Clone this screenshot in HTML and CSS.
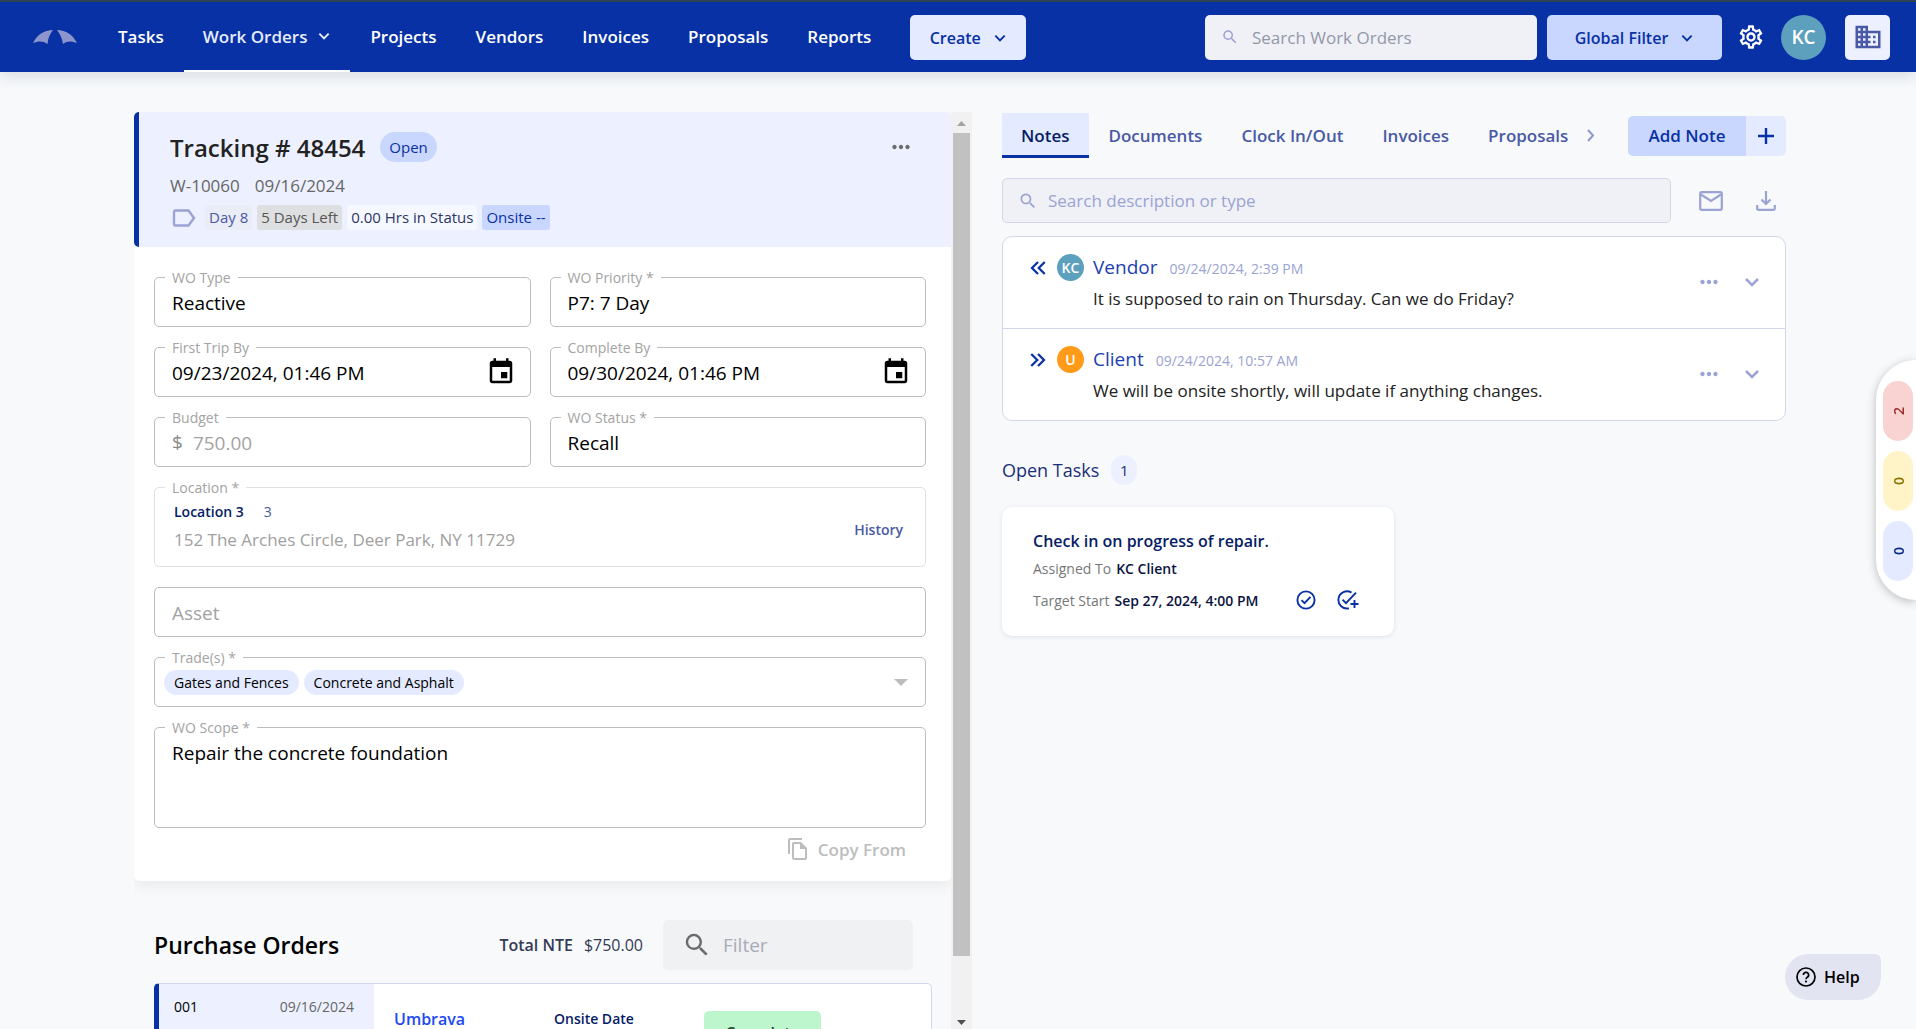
FILE: index.html
```html
<!DOCTYPE html>
<html lang="en">
<head>
  <meta charset="UTF-8">
  <title>Work Order W-10060</title>
  <meta name="viewport" content="width=device-width, initial-scale=1.0">
  <link rel="stylesheet" href="styles.css">
</head>
<body>

<!-- Shared icons -->
<svg class="sprite" aria-hidden="true">
  <symbol id="i-chevron" viewBox="0 0 24 24"><path d="M4 8l8 8 8-8" fill="none" stroke="currentColor" stroke-width="3.400"/></symbol>
  <symbol id="i-search" viewBox="0 0 24 24"><path fill="currentColor" d="M15.5 14h-.79l-.28-.27A6.47 6.47 0 0 0 16 9.5 6.5 6.5 0 1 0 9.5 16c1.61 0 3.09-.59 4.23-1.57l.27.28v.79l5 4.99L20.49 19l-4.99-5zm-6 0C7.01 14 5 11.99 5 9.5S7.01 5 9.5 5 14 7.01 14 9.5 11.99 14 9.5 14z"/></symbol>
  <symbol id="i-dots" viewBox="0 0 24 24"><path fill="currentColor" d="M6 10c-1.1 0-2 .9-2 2s.9 2 2 2 2-.9 2-2-.9-2-2-2zm12 0c-1.1 0-2 .9-2 2s.9 2 2 2 2-.9 2-2-.9-2-2-2zm-6 0c-1.1 0-2 .9-2 2s.9 2 2 2 2-.9 2-2-.9-2-2-2z"/></symbol>
  <symbol id="i-calendar" viewBox="0 0 24 24"><path fill="currentColor" d="M17 12h-5v5h5v-5zM16 1v2H8V1H6v2H5c-1.11 0-1.99.9-1.99 2L3 19c0 1.1.89 2 2 2h14c1.1 0 2-.9 2-2V5c0-1.1-.9-2-2-2h-1V1h-2zm3 18H5V8h14v11z"/></symbol>
  <symbol id="i-double" viewBox="0 0 24 24"><path d="M12 4l-8 8 8 8M21 4l-8 8 8 8" fill="none" stroke="currentColor" stroke-width="3"/></symbol>
</svg>

<header class="topbar">
  <a href="#" class="logo" aria-label="Home">
    <svg width="44" height="14" viewBox="0 0 44 14"><path fill="#8c95cc" d="M0 13C4 5 11 0 20 0C17 4 15 8 14.500 14C10 10.500 5 11 0 13zM24 0C33 0 40 5 44 13C39 11 34 10.500 30 14C29 8 27 4 24 0z"/></svg>
  </a>
  <nav class="nav">
    <a href="#">Tasks</a>
    <a href="#" class="active">Work Orders <svg class="icon-sm"><use href="#i-chevron"/></svg></a>
    <a href="#">Projects</a>
    <a href="#">Vendors</a>
    <a href="#">Invoices</a>
    <a href="#">Proposals</a>
    <a href="#">Reports</a>
  </nav>
  <button class="btn create">Create <svg class="icon-sm"><use href="#i-chevron"/></svg></button>
  <div class="topbar-right">
    <div class="top-search">
      <svg class="icon-md"><use href="#i-search"/></svg>
      <input type="text" placeholder="Search Work Orders" aria-label="Search Work Orders">
    </div>
    <button class="btn global">Global Filter <svg class="icon-sm"><use href="#i-chevron"/></svg></button>
    <button class="icon-btn gear" aria-label="Settings">
      <svg width="28" height="28" viewBox="0 0 24 24"><path fill="currentColor" d="M19.430 12.980c.04-.32.07-.64.07-.98 0-.34-.03-.66-.07-.98l2.110-1.650c.19-.15.24-.42.12-.64l-2-3.460c-.09-.16-.26-.25-.44-.25-.06 0-.12.010-.17.030l-2.490 1c-.52-.4-1.080-.73-1.690-.98l-.38-2.650C14.460 2.180 14.250 2 14 2h-4c-.25 0-.46.18-.49.42l-.38 2.650c-.61.25-1.170.59-1.690.98l-2.490-1c-.06-.02-.12-.03-.18-.03-.17 0-.34.09-.43.250l-2 3.460c-.13.220-.07.490.12.640l2.110 1.650c-.04.320-.07.650-.07.980s.03.660.07.980l-2.110 1.650c-.19.150-.24.420-.12.640l2 3.460c.09.160.26.250.44.250.06 0 .12-.01.170-.03l2.490-1c.52.400 1.080.730 1.690.980l.38 2.650c.03.240.24.420.49.420h4c.25 0 .46-.18.49-.42l.38-2.650c.61-.25 1.170-.59 1.690-.98l2.490 1c.06.020.12.030.18.030.17 0 .34-.09.43-.25l2-3.460c.12-.22.070-.49-.12-.64l-2.110-1.650zm-1.980-1.710c.04.310.05.520.05.730 0 .210-.02.430-.05.730l-.14 1.130.89.700 1.080.840-.7 1.210-1.270-.51-1.040-.42-.9.680c-.43.320-.84.560-1.250.730l-1.060.430-.16 1.130-.2 1.350h-1.400l-.19-1.350-.16-1.130-1.060-.43c-.43-.18-.83-.41-1.230-.71l-.91-.7-1.060.430-1.270.510-.7-1.210 1.080-.84.890-.7-.14-1.130c-.03-.31-.05-.54-.05-.74s.02-.43.05-.73l.14-1.130-.89-.7-1.080-.84.7-1.210 1.270.510 1.040.420.9-.68c.43-.32.84-.56 1.250-.73l1.060-.43.16-1.130.2-1.350h1.390l.19 1.350.16 1.130 1.060.430c.43.180.83.410 1.230.710l.91.700 1.060-.43 1.270-.51.7 1.210-1.070.85-.89.700.14 1.130zM12 8c-2.210 0-4 1.790-4 4s1.790 4 4 4 4-1.790 4-4-1.790-4-4-4zm0 6c-1.100 0-2-.9-2-2s.9-2 2-2 2 .9 2 2-.9 2-2 2z"/></svg>
    </button>
    <button class="avatar big">KC</button>
    <button class="building" aria-label="Company">
      <svg width="30" height="30" viewBox="0 0 24 24"><path fill="currentColor" d="M12 7V3H2v18h20V7H12zM6 19H4v-2h2v2zm0-4H4v-2h2v2zm0-4H4V9h2v2zm0-4H4V5h2v2zm4 12H8v-2h2v2zm0-4H8v-2h2v2zm0-4H8V9h2v2zm0-4H8V5h2v2zm10 12h-8v-2h2v-2h-2v-2h2v-2h-2V9h8v10zm-2-8h-2v2h2v-2zm0 4h-2v2h2v-2z"/></svg>
    </button>
  </div>
</header>

<main class="page">

  <!-- Left: work order -->
  <section class="left">
    <div class="scroll-area">
      <div class="card wo">
        <div class="wo-head">
          <div class="wo-title">
            <h1>Tracking # 48454</h1>
            <span class="status">Open</span>
            <button class="icon-btn more" aria-label="More"><svg class="icon-lg"><use href="#i-dots"/></svg></button>
          </div>
          <div class="wo-sub"><span>W-10060</span><span>09/16/2024</span></div>
          <div class="tags">
            <svg width="24" height="18" viewBox="0 0 24 18"><path d="M2 3a1.500 1.500 0 0 1 1.500-1.500H16.500L22 9l-5.500 7.500H3.500A1.500 1.500 0 0 1 2 15z" fill="none" stroke="#9aa3d3" stroke-width="2.400"/></svg>
            <span class="tag day">Day 8</span>
            <span class="tag left-days">5 Days Left</span>
            <span class="tag hrs">0.00 Hrs in Status</span>
            <span class="tag onsite">Onsite --</span>
          </div>
        </div>

        <form class="wo-form">
          <div class="field">
            <label for="type">WO Type</label>
            <input id="type" type="text" value="Reactive">
          </div>
          <div class="field">
            <label for="priority">WO Priority *</label>
            <input id="priority" type="text" value="P7: 7 Day">
          </div>
          <div class="field date">
            <label for="first">First Trip By</label>
            <input id="first" type="text" value="09/23/2024, 01:46 PM">
            <svg class="cal"><use href="#i-calendar"/></svg>
          </div>
          <div class="field date">
            <label for="complete">Complete By</label>
            <input id="complete" type="text" value="09/30/2024, 01:46 PM">
            <svg class="cal"><use href="#i-calendar"/></svg>
          </div>
          <div class="field muted">
            <label for="budget">Budget</label>
            <span class="prefix">$</span>
            <input id="budget" type="text" value="750.00">
          </div>
          <div class="field">
            <label for="status">WO Status *</label>
            <input id="status" type="text" value="Recall">
          </div>
          <div class="field wide location">
            <span class="legend">Location *</span>
            <div class="loc-info">
              <div class="loc-name"><a href="#">Location 3</a><span>3</span></div>
              <div class="loc-addr">152 The Arches Circle, Deer Park, NY 11729</div>
            </div>
            <a href="#" class="history">History</a>
          </div>
          <div class="field wide">
            <input type="text" placeholder="Asset" aria-label="Asset">
          </div>
          <div class="field wide trades">
            <span class="legend">Trade(s) *</span>
            <span class="chip">Gates and Fences</span>
            <span class="chip">Concrete and Asphalt</span>
            <button type="button" class="icon-btn caret" aria-label="Show trades"><svg width="14" height="7" viewBox="0 0 14 7"><path d="M0 0h14L7 7z" fill="currentColor"/></svg></button>
          </div>
          <div class="field wide scope">
            <label for="scope">WO Scope *</label>
            <textarea id="scope">Repair the concrete foundation</textarea>
          </div>
        </form>
        <div class="wo-foot">
          <button class="copy">
            <svg width="24" height="24" viewBox="0 0 24 24"><path fill="currentColor" d="M16 1H4C2.900 1 2 1.900 2 3v14h2V3h12V1zm-1 4H8c-1.100 0-2 .9-2 2v14c0 1.100.9 2 2 2h11c1.100 0 2-.9 2-2V11l-6-6zM8 21V7h6v5h5v9H8z"/></svg>
            Copy From
          </button>
        </div>
      </div>

      <!-- Purchase orders -->
      <div class="po-head">
        <h2>Purchase Orders</h2>
        <span class="nte">Total NTE</span>
        <span class="nte-value">$750.00</span>
        <div class="filter">
          <svg class="icon-xl"><use href="#i-search"/></svg>
          <input type="text" placeholder="Filter" aria-label="Filter">
        </div>
      </div>
      <div class="po">
        <div class="po-id"><span>001</span><span class="po-date">09/16/2024</span></div>
        <a href="#" class="po-vendor">Umbrava</a>
        <span class="po-onsite">Onsite Date</span>
        <span class="po-status">Complete</span>
      </div>
    </div>
    <div class="scrollbar" aria-hidden="true">
      <svg width="9" height="5" viewBox="0 0 9 5"><path d="M0 5h9L4.500 0z" fill="#a3a3a3"/></svg>
      <div class="thumb"></div>
      <svg width="9" height="5" viewBox="0 0 9 5"><path d="M0 0h9L4.500 5z" fill="#505050"/></svg>
    </div>
  </section>

  <!-- Right: notes and tasks -->
  <section class="right">
    <div class="tab-row">
      <nav class="tabs">
        <a href="#" class="active">Notes</a>
        <a href="#">Documents</a>
        <a href="#">Clock In/Out</a>
        <a href="#">Invoices</a>
        <a href="#">Proposals</a>
      </nav>
      <svg class="next" width="8" height="13" viewBox="0 0 8 13"><path d="M1 1l5 5.500L1 12" fill="none" stroke="#8f98cc" stroke-width="2"/></svg>
      <div class="add-note">
        <button class="add">Add Note</button>
        <button class="plus" aria-label="Add"><svg width="16" height="16" viewBox="0 0 16 16"><path d="M8 0v16M0 8h16" stroke="currentColor" stroke-width="2.400"/></svg></button>
      </div>
    </div>

    <div class="note-tools">
      <div class="note-search">
        <svg class="icon-note"><use href="#i-search"/></svg>
        <input type="text" placeholder="Search description or type" aria-label="Search notes">
      </div>
      <button class="icon-btn" aria-label="Email"><svg width="24" height="20" viewBox="0 0 24 20"><rect x="1.200" y="1.200" width="21.600" height="17.600" rx="1.500" fill="none" stroke="currentColor" stroke-width="2.200"/><path d="M2 3.500l10 6.500 10-6.500" fill="none" stroke="currentColor" stroke-width="2.200"/></svg></button>
      <button class="icon-btn" aria-label="Download"><svg width="20" height="20" viewBox="0 0 20 20"><path d="M10 0v13M5.500 8.500L10 13l4.500-4.500M1.200 14v3.300a1.500 1.500 0 0 0 1.500 1.500h14.600a1.500 1.500 0 0 0 1.500-1.500V14" fill="none" stroke="currentColor" stroke-width="2.200"/></svg></button>
    </div>

    <div class="notes">
      <article class="note">
        <svg class="icon-dir"><use href="#i-double"/></svg>
        <span class="avatar small">KC</span>
        <div class="note-body">
          <div class="note-top"><a href="#">Vendor</a><time>09/24/2024, 2:39 PM</time></div>
          <p>It is supposed to rain on Thursday. Can we do Friday?</p>
        </div>
        <button class="icon-btn" aria-label="More"><svg class="icon-lg"><use href="#i-dots"/></svg></button>
        <button class="icon-btn" aria-label="Expand"><svg class="icon-exp"><use href="#i-chevron"/></svg></button>
      </article>
      <article class="note">
        <svg class="icon-dir flip"><use href="#i-double"/></svg>
        <span class="avatar small orange">U</span>
        <div class="note-body">
          <div class="note-top"><a href="#">Client</a><time>09/24/2024, 10:57 AM</time></div>
          <p>We will be onsite shortly, will update if anything changes.</p>
        </div>
        <button class="icon-btn" aria-label="More"><svg class="icon-lg"><use href="#i-dots"/></svg></button>
        <button class="icon-btn" aria-label="Expand"><svg class="icon-exp"><use href="#i-chevron"/></svg></button>
      </article>
    </div>

    <div class="tasks-head"><h3>Open Tasks</h3><span class="count">1</span></div>
    <div class="task">
      <h4>Check in on progress of repair.</h4>
      <div class="task-line"><span>Assigned To</span><b>KC Client</b></div>
      <div class="task-line last">
        <span>Target Start</span><b>Sep 27, 2024, 4:00 PM</b>
        <button class="icon-btn" aria-label="Complete task"><svg width="20" height="20" viewBox="0 0 20 20"><circle cx="10" cy="10" r="8.600" fill="none" stroke="currentColor" stroke-width="1.900"/><path d="M5.500 10.200l3 3 6-6.400" fill="none" stroke="currentColor" stroke-width="1.900"/></svg></button>
        <button class="icon-btn" aria-label="Complete and add task"><svg width="22" height="20" viewBox="0 0 22 20"><path d="M14.500 2.600A8.600 8.600 0 1 0 12 18.300M5.500 9.700l3.500 3.500L19 2.600M17.500 10v8M13.500 14h8" fill="none" stroke="currentColor" stroke-width="1.900"/></svg></button>
      </div>
    </div>
  </section>
</main>

<aside class="counters">
  <button class="counter red">2</button>
  <button class="counter yellow">0</button>
  <button class="counter blue">0</button>
</aside>

<button class="help">
  <svg width="20" height="20" viewBox="0 0 20 20"><circle cx="10" cy="10" r="9" fill="none" stroke="currentColor" stroke-width="1.700"/><path d="M7.400 8a2.600 2.600 0 1 1 3.900 2.200c-.9.500-1.300.9-1.300 2" fill="none" stroke="currentColor" stroke-width="1.700"/><circle cx="10" cy="14.500" r="1.100" fill="currentColor"/></svg>
  Help
</button>

</body>
</html>
```
FILE: styles.css
```css
/* Base */
* {
  box-sizing: border-box;
}
body {
  margin: 0;
  height: 100vh;
  overflow: hidden;
  display: flex;
  flex-direction: column;
  background: #f7f9fb;
  font-family: "Open Sans", "Noto Sans", sans-serif;
  font-size: 16px;
  color: #000;
}
h1, h2, h3, h4, p {
  margin: 0;
  font-weight: 600;
}
a {
  text-decoration: none;
  color: inherit;
}
button, input, textarea {
  font: inherit;
  color: inherit;
  border: 0;
  padding: 0;
  background: none;
  outline: none;
}
button {
  cursor: pointer;
}
svg {
  display: block;
  flex: none;
}
.sprite {
  position: absolute;
  width: 0;
  height: 0;
}
.icon-sm { width: 14px; height: 14px; }
.icon-md { width: 18px; height: 18px; }
.icon-note { width: 20px; height: 20px; }
.icon-lg { width: 26px; height: 26px; }
.icon-xl { width: 30px; height: 30px; }
.icon-exp { width: 18px; height: 18px; }
.icon-dir { width: 20px; height: 18px; }
.icon-btn {
  display: flex;
  align-items: center;
  justify-content: center;
}

/* Top bar */
.topbar {
  flex: none;
  display: flex;
  align-items: center;
  height: 72px;
  padding: 0 26px 0 33px;
  background: #0831a5;
  border-top: 2px solid #2c4153;
  box-shadow: 0 4px 14px rgba(30, 60, 90, 0.14);
}
.logo {
  margin-right: 22px;
}
.nav {
  display: flex;
  gap: 1px;
  align-self: stretch;
  color: #fff;
  font-size: 17px;
  font-weight: 600;
}
.nav a {
  display: flex;
  align-items: center;
  gap: 10px;
  padding: 0 19px;
  border-bottom: 2px solid transparent;
}
.nav .active {
  color: #e6ebff;
  border-color: #fff;
}
.btn {
  display: flex;
  align-items: center;
  justify-content: center;
  gap: 12px;
  height: 45px;
  padding-top: 2px;
  border-radius: 5px;
  color: #0831a5;
  font-weight: 600;
}
.create {
  width: 116px;
  margin-left: 20px;
  background: #e4eaff;
}
.topbar-right {
  display: flex;
  align-items: center;
  margin-left: auto;
}
.top-search {
  display: flex;
  align-items: center;
  gap: 13px;
  width: 332px;
  height: 45px;
  padding: 0 16px;
  margin-right: 10px;
  border-radius: 5px;
  background: #f0f1f7;
  color: #9aa3d3;
  font-size: 17px;
}
.top-search input,
.note-search input,
.filter input {
  flex: 1;
  min-width: 0;
}
.top-search input::placeholder {
  color: #9298a8;
}
.global {
  width: 175px;
  background: #c9d7ff;
}
.gear {
  margin: 0 16px 0 15px;
  color: #fff;
}
.avatar {
  display: flex;
  align-items: center;
  justify-content: center;
  flex: none;
  border-radius: 50%;
  background: #5ca0bd;
  color: #fff;
  font-weight: 600;
}
.avatar.big {
  width: 45px;
  height: 45px;
  font-size: 19px;
}
.avatar.small {
  width: 27px;
  height: 27px;
  font-size: 14px;
}
.avatar.orange {
  background: #ff9b19;
}
.building {
  display: flex;
  align-items: center;
  justify-content: center;
  width: 45px;
  height: 45px;
  margin-left: 19px;
  border-radius: 5px;
  background: #edf1ff;
  color: #4a59a5;
}

/* Page columns */
.page {
  flex: 1;
  min-height: 0;
  display: grid;
  grid-template-columns: 838fr 784fr;
  gap: 30px;
  padding: 40px 130px 0 134px;
}
.left {
  display: flex;
  min-width: 0;
  min-height: 0;
}
.scroll-area {
  flex: 1;
  min-width: 0;
  overflow: hidden;
}
.scrollbar {
  display: flex;
  flex-direction: column;
  align-items: center;
  width: 21px;
  padding: 9px 2px 4px;
  background: #f1f1f1;
}
.thumb {
  flex: none;
  width: 17px;
  height: 91%;
  margin: 7px 0 auto;
  background: #c1c1c1;
}

/* Work order card */
.card {
  background: #fff;
  border-radius: 5px;
  box-shadow: 0 6px 14px rgba(0, 0, 0, 0.06);
}
.wo-head {
  height: 135px;
  padding: 18px 37px 0 31px;
  border-left: 5px solid #0831a5;
  border-radius: 5px 5px 0 5px;
  background: #edf1ff;
}
.wo-title {
  display: flex;
  align-items: center;
  height: 34px;
}
.wo-title h1 {
  font-size: 24px;
  color: #222;
}
.status {
  margin-left: 15px;
  padding: 0 9px;
  border-radius: 15px;
  background: #c9d7ff;
  color: #0831a5;
  font-size: 15px;
  line-height: 30px;
}
.more {
  margin-left: auto;
  color: #6d6d6d;
}
.wo-sub {
  display: flex;
  gap: 15px;
  margin-top: 10px;
  color: #666;
  font-size: 17px;
  line-height: 24px;
}
.tags {
  display: flex;
  align-items: center;
  gap: 5px;
  margin-top: 7px;
  padding-left: 2px;
  font-size: 15px;
}
.tags svg {
  margin-right: 4px;
}
.tag {
  padding: 0 4px;
  border-radius: 3px;
  line-height: 25px;
}
.day { background: #eaedf6; color: #4a59a5; }
.left-days { background: #dedfe0; color: #555; }
.hrs { background: #f6f8ff; color: #2c3566; }
.onsite { background: #c9d7ff; color: #0831a5; }

.wo-form {
  display: grid;
  grid-template-columns: 1fr 1fr;
  gap: 20px 19px;
  padding: 30px 25px 0 20px;
}
.field {
  position: relative;
  display: flex;
  align-items: center;
  height: 50px;
  padding: 0 17px;
  border: 1px solid #bdbdbd;
  border-radius: 5px;
  font-size: 19px;
}
.wide {
  grid-column: 1 / -1;
}
.field input {
  flex: 1;
  min-width: 0;
  padding-top: 2px;
}
.field input::placeholder {
  color: #a3a3a3;
}
.field label,
.legend {
  position: absolute;
  top: -10px;
  left: 10px;
  padding: 0 7px;
  background: #fff;
  color: #a3a3a3;
  font-size: 14px;
  line-height: 20px;
}
.date {
  padding-right: 14px;
}
.cal {
  width: 30px;
  height: 30px;
}
.muted {
  color: #a3a3a3;
}
.prefix {
  margin-right: 10px;
  color: #888;
}
.location {
  height: 80px;
  padding: 0 22px 0 19px;
  border-color: #e0e0e0;
}
.loc-info {
  flex: 1;
  padding-top: 2px;
}
.loc-name {
  display: flex;
  gap: 20px;
  color: #4a59a5;
  font-size: 14px;
  line-height: 24px;
}
.loc-name a {
  color: #061c66;
  font-weight: 600;
}
.loc-addr {
  color: #a0a0a0;
  font-size: 17px;
  line-height: 32px;
}
.history {
  padding-top: 4px;
  color: #4a59a5;
  font-size: 14px;
  font-weight: 600;
}
.trades {
  gap: 5px;
  padding: 0 17px 0 9px;
}
.chip {
  padding: 0 10px;
  border-radius: 13px;
  background: #e4eaff;
  font-size: 14px;
  line-height: 25px;
}
.caret {
  margin-left: auto;
  color: #bdbdbd;
}
.scope {
  height: 101px;
}
.scope textarea {
  flex: 1;
  height: 100%;
  padding-top: 11px;
  line-height: 28px;
  resize: none;
}
.wo-foot {
  display: flex;
  justify-content: flex-end;
  height: 53px;
  padding: 9px 45px 0 0;
}
.copy {
  display: flex;
  align-items: center;
  gap: 8px;
  height: 24px;
  color: #bdbdbd;
  font-size: 17px;
  font-weight: 600;
}

/* Purchase orders */
.po-head {
  display: flex;
  align-items: center;
  height: 50px;
  margin: 39px 38px 13px 20px;
  color: #343b54;
}
.po-head h2 {
  flex: 1;
  color: #000;
  font-size: 23px;
}
.nte {
  margin-right: 11px;
  font-weight: 600;
}
.filter {
  display: flex;
  align-items: center;
  gap: 11px;
  width: 250px;
  height: 50px;
  margin-left: 20px;
  padding: 0 19px;
  border-radius: 5px;
  background: #f0f1f3;
  color: #6b6b6b;
  font-size: 19px;
}
.filter input::placeholder {
  color: #a8abb8;
}
.po {
  display: grid;
  grid-template-columns: 215px 160px 170px 117px;
  height: 120px;
  margin: 0 19px 0 20px;
  border: 1px solid #d3d7ec;
  border-left: 5px solid #0831a5;
  border-radius: 5px;
  background: #fff;
}
.po-id {
  display: flex;
  justify-content: space-between;
  padding: 13px 20px 0 15px;
  background: #edf1ff;
  font-size: 14px;
}
.po-date {
  color: #666;
}
.po-vendor {
  padding: 25px 0 0 20px;
  color: #2148f5;
  font-weight: 600;
  line-height: 20px;
}
.po-onsite {
  padding: 25px 0 0 20px;
  color: #061c66;
  font-size: 14px;
  font-weight: 600;
  line-height: 20px;
}
.po-status {
  height: 48px;
  margin-top: 27px;
  border-radius: 5px;
  background: #bdf6cd;
  color: #1e4d2c;
  font-weight: 600;
  line-height: 45px;
  text-align: center;
}

/* Tabs */
.tab-row {
  display: flex;
  align-items: center;
  height: 47px;
}
.tabs {
  display: flex;
  gap: 1px;
  color: #4a59a5;
  font-size: 17px;
  font-weight: 600;
}
.tabs a {
  height: 45px;
  padding: 0 19px;
  border-bottom: 3px solid transparent;
  line-height: 45px;
}
.tabs .active {
  border-color: #0831a5;
  background: #e4eaff;
  color: #061c66;
}
.add-note {
  display: flex;
  height: 40px;
  margin-left: auto;
  border-radius: 5px;
  overflow: hidden;
  color: #0831a5;
  font-size: 17px;
  font-weight: 600;
}
.add {
  width: 118px;
  background: #c9d7ff;
}
.plus {
  display: flex;
  align-items: center;
  justify-content: center;
  width: 40px;
  background: #e4eaff;
}

/* Notes */
.note-tools {
  display: flex;
  align-items: center;
  gap: 15px;
  margin: 19px 0 13px;
  color: #9aa3d3;
}
.note-tools .icon-btn {
  width: 40px;
}
.note-search {
  flex: 1;
  display: flex;
  align-items: center;
  gap: 10px;
  height: 45px;
  margin-right: 5px;
  padding: 0 15px;
  border: 1px solid #d3d7ec;
  border-radius: 5px;
  background: #f0f1f7;
  font-size: 17px;
}
.note-search input::placeholder {
  color: #9aa3d3;
}
.notes {
  border: 1px solid #d3d7ec;
  border-radius: 10px;
  background: #fff;
}
.note {
  box-sizing: content-box;
  display: flex;
  gap: 9px;
  height: 74px;
  padding: 17px 24px 0 25px;
  color: #9aa3d3;
}
.note + .note {
  border-top: 1px solid #d3d7ec;
}
.icon-dir {
  margin-top: 5px;
  color: #0831a5;
}
.flip {
  transform: scaleX(-1);
}
.note-body {
  flex: 1;
}
.note-top {
  display: flex;
  align-items: baseline;
  gap: 12px;
  line-height: 26px;
}
.note-top a {
  color: #1b3fb0;
  font-size: 19px;
}
.note-top time {
  font-size: 14px;
}
.note p {
  margin-top: 4px;
  color: #222;
  font-size: 17px;
  font-weight: 400;
  line-height: 26px;
}
.note .icon-btn {
  height: 56px;
  margin-left: 12px;
}

/* Open tasks */
.tasks-head {
  display: flex;
  align-items: center;
  gap: 12px;
  margin: 34px 0 22px;
  color: #1b2f78;
}
.tasks-head h3 {
  font-size: 18px;
  font-weight: 400;
}
.count {
  width: 26px;
  border-radius: 13px;
  background: #edf1ff;
  font-size: 15px;
  line-height: 30px;
  text-align: center;
}
.task {
  width: 50%;
  height: 129px;
  padding: 22px 35px 0 31px;
  border-radius: 10px;
  background: #fff;
  box-shadow: 0 1px 4px rgba(30, 60, 120, 0.12);
}
.task h4 {
  color: #061c66;
  font-size: 16px;
  line-height: 24px;
}
.task-line {
  display: flex;
  align-items: center;
  gap: 5px;
  height: 30px;
  color: #777;
  font-size: 14px;
}
.task-line b {
  color: #0b1440;
  font-weight: 600;
}
.task-line .icon-btn {
  margin-left: 16px;
  color: #0831a5;
}
.task-line.last {
  height: 34px;
}
.task-line b + .icon-btn {
  margin-left: auto;
}

/* Floating widgets */
.counters {
  position: fixed;
  top: 360px;
  right: 0;
  display: flex;
  flex-direction: column;
  gap: 10px;
  padding: 21px 3px 19px 7px;
  border-radius: 40px 0 0 40px;
  background: #fff;
  box-shadow: 0 2px 10px rgba(0, 0, 0, 0.25);
}
.counter {
  width: 30px;
  height: 60px;
  border-radius: 15px;
  font-size: 14px;
  font-weight: 600;
  writing-mode: sideways-lr;
}
.red { background: #f9d2d2; color: #9c2c2c; }
.yellow { background: #fff4c7; color: #8a7400; }
.blue { background: #e4eaff; color: #0a2c86; }
.help {
  position: fixed;
  right: 35px;
  bottom: 29px;
  display: flex;
  align-items: center;
  gap: 8px;
  width: 96px;
  height: 46px;
  padding-left: 11px;
  border-radius: 23px 6px 23px 23px;
  background: #e3e4f1;
  font-weight: 600;
}
```
